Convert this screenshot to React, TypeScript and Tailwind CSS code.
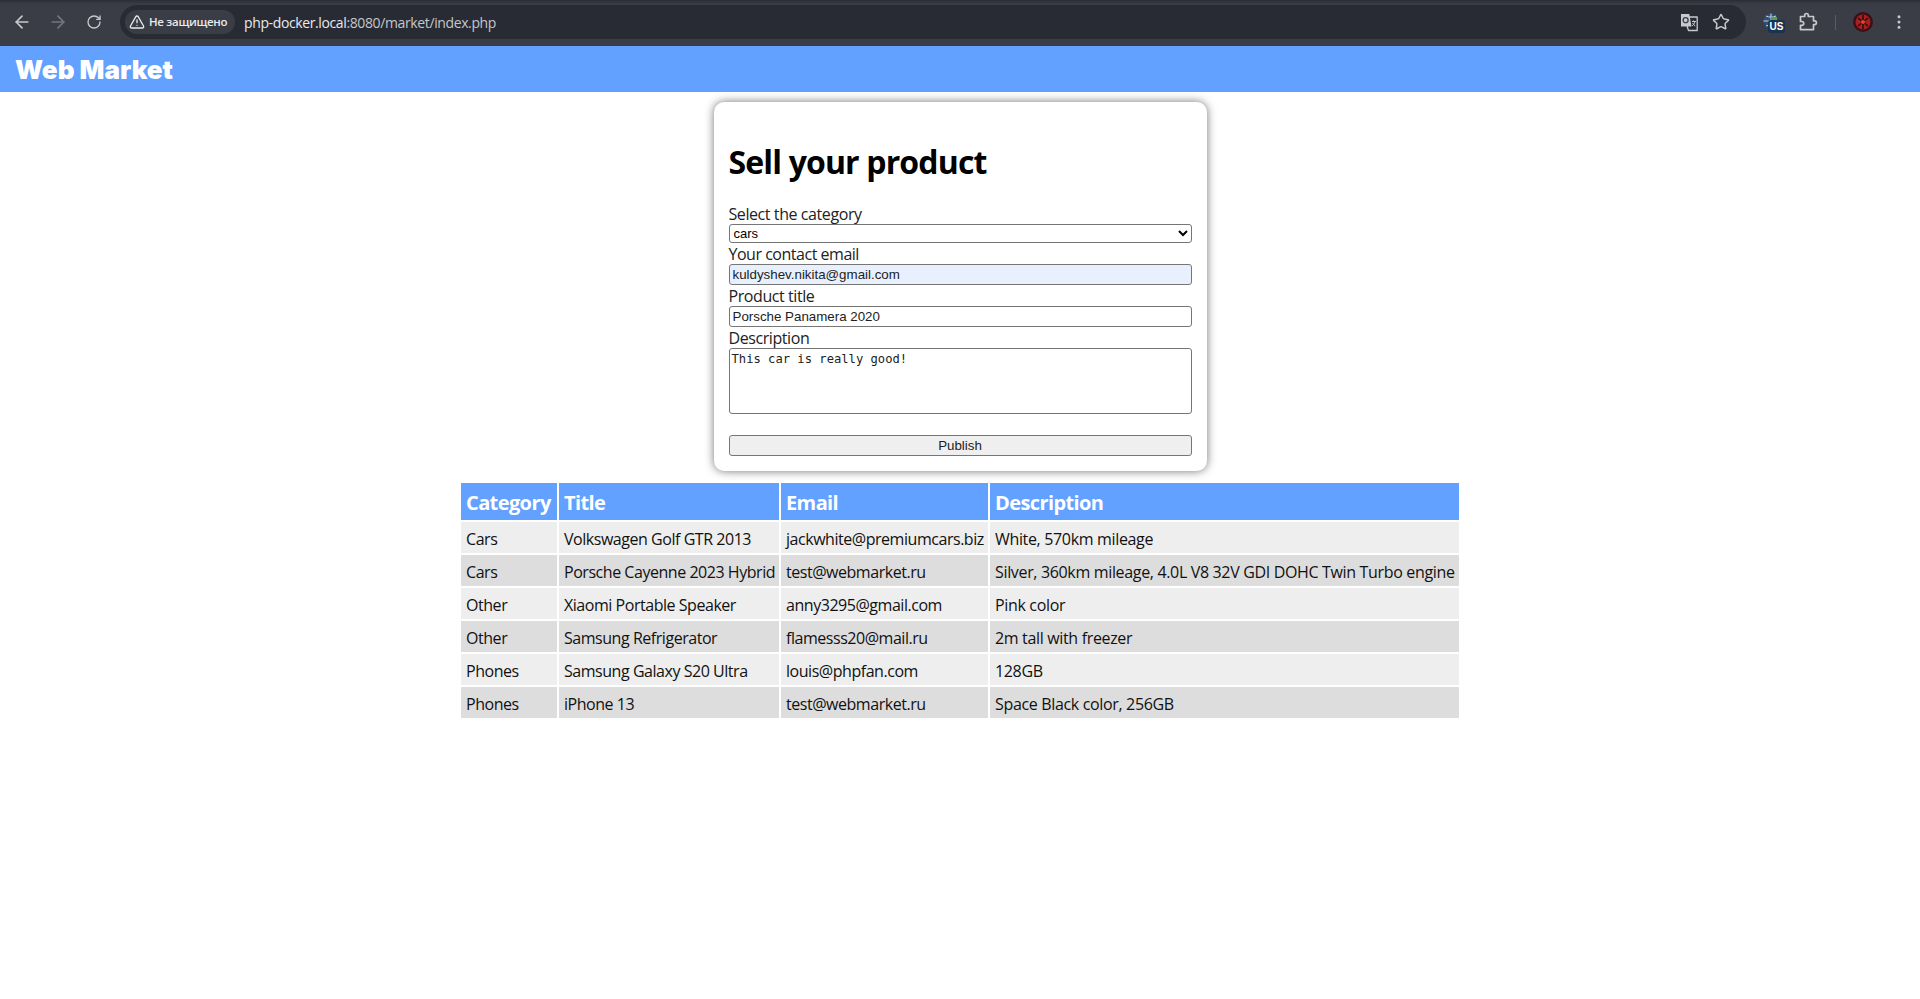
import { ArrowLeft, ArrowRight, RotateCw, TriangleAlert, Star, EllipsisVertical } from 'lucide-react';

const rows = [
  ['Cars', 'Volkswagen Golf GTR 2013', 'jackwhite@premiumcars.biz', 'White, 570km mileage'],
  ['Cars', 'Porsche Cayenne 2023 Hybrid', 'test@webmarket.ru', 'Silver, 360km mileage, 4.0L V8 32V GDI DOHC Twin Turbo engine'],
  ['Other', 'Xiaomi Portable Speaker', 'anny3295@gmail.com', 'Pink color'],
  ['Other', 'Samsung Refrigerator', 'flamesss20@mail.ru', '2m tall with freezer'],
  ['Phones', 'Samsung Galaxy S20 Ultra', 'louis@phpfan.com', '128GB'],
  ['Phones', 'iPhone 13', 'test@webmarket.ru', 'Space Black color, 256GB'],
];

// letter spacing per column, the fallback font runs a bit wider or narrower than the original
const cellTracking = ['tracking-[-0.45px]', 'tracking-[-0.46px]', 'tracking-[-0.46px]', 'tracking-[-0.34px]'];

const TranslateIcon = () => (
  <svg width="20" height="20" viewBox="0 0 20 20" fill="none">
    <path d="M9 5h9.200v13.500H9.500L8 14" stroke="#c7c9cf" strokeWidth="1.300" strokeLinejoin="round" />
    <path d="M2 2h8.300L12.500 14.500H2z" fill="#c7c9cf" />
    <circle cx="6.600" cy="8.200" r="2.500" stroke="#3a3d46" strokeWidth="1.300" />
    <path d="M13 9.500h4M14.500 8.500v1M16 9.500c-.5 2-1.700 3.500-3 4.500M13.600 11c.6 1.300 1.500 2.300 2.700 3" stroke="#c7c9cf" strokeWidth="1" />
  </svg>
);

const ExtensionIcon = () => (
  <svg width="20" height="20" viewBox="0 0 20 20" fill="none">
    <path d="M2.500 4.500h4.200V3.300a1.800 1.800 0 0 1 3.600 0v1.200h5.200v4.300h1a1.900 1.900 0 0 1 0 3.800h-1v5H2.500v-4.300h1.300a1.900 1.900 0 0 0 0-3.800H2.500z" stroke="#c7c9cf" strokeWidth="1.700" strokeLinejoin="round" />
  </svg>
);

const VpnIcon = () => (
  <div className="relative w-[20px] h-[20px]">
    <svg width="20" height="20" viewBox="0 0 20 20" fill="none">
      <circle cx="9" cy="9" r="7.500" fill="#2c4f78" />
      <path d="M1.500 9h15M9 1.500v15M4 4c3 1.500 7 1.500 10 0M4 14c3-1.500 7-1.500 10 0" stroke="#c7d4e2" strokeWidth="1" />
      <rect x="9" y="5" width="6" height="6" fill="#4fa24a" />
    </svg>
    <div className="absolute left-[6px] top-[8px] w-[17px] h-[13px] rounded-[3px] bg-[#1c3350] text-white text-[10px] leading-[13px] font-bold text-center font-['Liberation_Sans',sans-serif]">
      US
    </div>
  </div>
);

const Avatar = () => (
  <svg width="20" height="20" viewBox="0 0 20 20">
    <circle cx="10" cy="10" r="10" fill="#3d1013" />
    <circle cx="10" cy="10" r="7.500" fill="#a81f1f" />
    <path d="M5 6l10 8M15 6L5 14M10 3v14" stroke="#2a0a0c" strokeWidth="1.500" />
    <circle cx="10" cy="10" r="2" fill="#e2412f" />
  </svg>
);

export default function App() {
  return (
    <div className="min-h-[999px] bg-white text-black font-['Open_Sans',sans-serif]">
      {/* browser toolbar */}
      <div className="h-[46px] bg-[linear-gradient(#2b2d34_0,#3a3d46_4px)] flex items-center pl-[12px] pr-[12px] pb-[2px]">
        <div className="w-[20px] flex justify-center"><ArrowLeft size={20} color="#c7c9cf" /></div>
        <div className="w-[20px] ml-[16px] flex justify-center"><ArrowRight size={20} color="#74767d" /></div>
        <div className="w-[20px] ml-[16px] flex justify-center"><RotateCw size={16} color="#c7c9cf" /></div>
        <div className="ml-[16px] w-[1626px] h-[34px] rounded-full bg-[#282b33] flex items-center pl-[5px] pr-[16px]">
          <div className="h-[24px] w-[110px] rounded-full bg-[#3a3d46] flex items-center pl-[4px] gap-[4px] text-[#e8eaed] text-[11.5px] font-semibold tracking-[-0.3px] whitespace-nowrap">
            <TriangleAlert size={16} color="#e8eaed" />
            Не защищено
          </div>
          <div className="ml-[9px] text-[14px] tracking-[-0.38px] text-[#c4c6cb]">
            <span className="text-[#e8eaed]">php-docker.local</span>:8080/market/index.php
          </div>
          <div className="ml-auto flex items-center gap-[13px]">
            <TranslateIcon />
            <Star size={18} color="#c7c9cf" strokeWidth={2} />
          </div>
        </div>
        <div className="ml-[16px]"><VpnIcon /></div>
        <div className="ml-[16px]"><ExtensionIcon /></div>
        <div className="ml-[17px] w-px h-[15px] bg-[#5a5d66]" />
        <div className="ml-[17px]"><Avatar /></div>
        <div className="ml-[17px]"><EllipsisVertical size={18} color="#c7c9cf" /></div>
      </div>

      {/* site header */}
      <header className="h-[46px] bg-[#62a1ff] flex items-center px-[15px] pt-[1px]">
        <h1 className="text-white text-[26px] font-black font-['Inter',sans-serif]">Web Market</h1>
      </header>

      {/* sell form */}
      <div className="flex justify-center pt-[10px]">
        <form className="w-[493px] h-[369px] rounded-[10px] bg-white shadow-[0_0_10px_rgba(0,0,0,0.55)] px-[15px] flex flex-col">
          <h2 className="mt-[38px] mb-[20px] text-[32px] leading-[43px] font-bold tracking-[-0.85px]">Sell your product</h2>
          <label className="block h-[21px] text-[16px] leading-[23px] text-[#222] tracking-[-0.42px]" htmlFor="category">Select the category</label>
          <select id="category" className="block w-full h-[19px] border border-[#767676] rounded-[3px] bg-white text-[13px] font-['Liberation_Sans',sans-serif] appearance-auto" defaultValue="cars">
            <option value="cars">cars</option>
          </select>
          <label className="block h-[21px] text-[16px] leading-[23px] text-[#222] tracking-[-0.48px]" htmlFor="email">Your contact email</label>
          <input id="email" readOnly value="kuldyshev.nikita@gmail.com" className="block w-full h-[21px] border border-[#767676] rounded-[3px] bg-[#e8f0fe] px-[3px] text-[13.33px] text-[#222] font-['Liberation_Sans',sans-serif]" />
          <label className="block h-[21px] text-[16px] leading-[23px] text-[#222] tracking-[-0.42px]" htmlFor="title">Product title</label>
          <input id="title" readOnly value="Porsche Panamera 2020" className="block w-full h-[21px] border border-[#767676] rounded-[3px] bg-white px-[3px] text-[13.33px] text-[#222] font-['Liberation_Sans',sans-serif]" />
          <label className="block h-[21px] text-[16px] leading-[23px] text-[#222] tracking-[-0.42px]" htmlFor="desc">Description</label>
          <textarea id="desc" readOnly value="This car is really good!" className="block w-full h-[66px] border border-[#767676] rounded-[3px] bg-white px-[2px] pt-[3px] text-[12.17px] leading-[15px] text-[#222] font-['DejaVu_Sans_Mono',monospace] resize-none" />
          <button type="button" className="mt-[21px] block w-full h-[21px] border border-[#767676] rounded-[3px] bg-[#efefef] text-[13.33px] leading-[19px] text-[#222] font-['Liberation_Sans',sans-serif]">Publish</button>
        </form>
      </div>

      {/* listings */}
      <div className="flex justify-center pt-[10px]">
        <table className="w-[1002px] table-fixed border-separate border-spacing-[2px]">
          <colgroup>
            <col className="w-[96px]" />
            <col className="w-[220px]" />
            <col className="w-[207px]" />
            <col />
          </colgroup>
          <thead>
            <tr className="bg-[#62a1ff] text-white text-[20px] text-left">
              <th className="px-[5px] pt-[2px] h-[37px] font-bold tracking-[-0.6px]">Category</th>
              <th className="px-[5px] pt-[2px] h-[37px] font-bold tracking-[-0.6px]">Title</th>
              <th className="px-[5px] pt-[2px] h-[37px] font-bold tracking-[-0.6px]">Email</th>
              <th className="px-[5px] pt-[2px] h-[37px] font-bold tracking-[-0.6px]">Description</th>
            </tr>
          </thead>
          <tbody>
            {rows.map((row, i) => (
              <tr key={i} className={i % 2 === 0 ? 'bg-[#eeeeee]' : 'bg-[#dddddd]'}>
                {row.map((cell, j) => (
                  <td key={j} className={`px-[5px] pt-[2px] h-[31px] text-[16px] text-[#111] whitespace-nowrap ${cellTracking[j]}`}>{cell}</td>
                ))}
              </tr>
            ))}
          </tbody>
        </table>
      </div>
    </div>
  );
}
